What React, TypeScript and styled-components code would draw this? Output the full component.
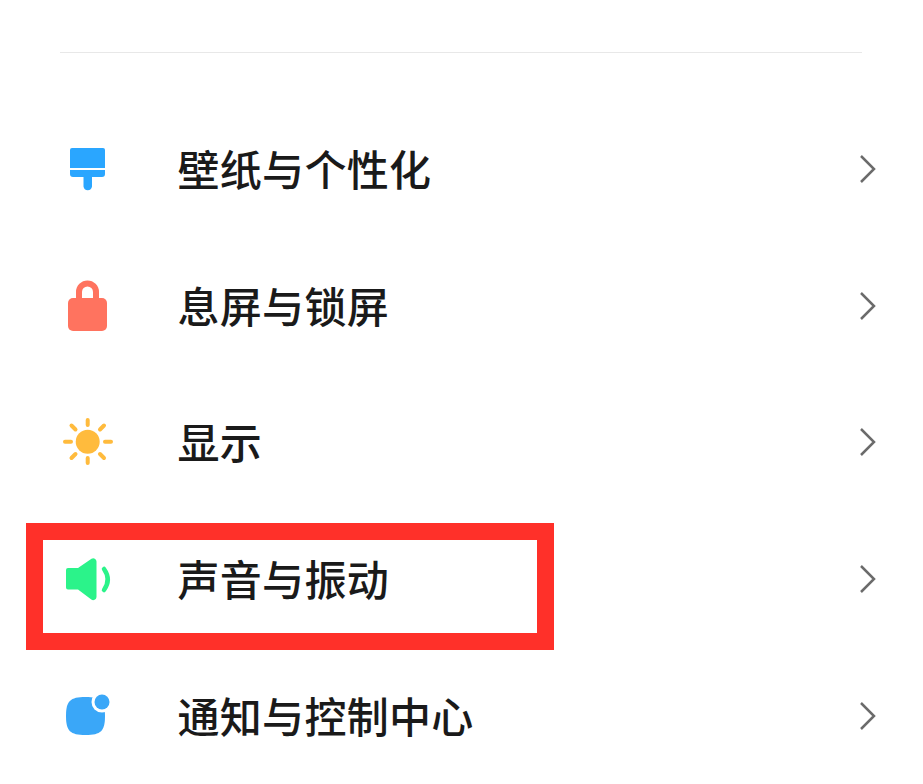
import React from "react";
import styled, { createGlobalStyle } from "styled-components";

const Global = createGlobalStyle`
  html, body { margin: 0; padding: 0; background: #fff; overflow: hidden; }
  #root { width: 923px; height: 784px; overflow: hidden; }
`;

const Page = styled.main`
  width: 923px;
  padding-top: 52px;
  font-family: "Noto Sans CJK SC", "Noto Sans", sans-serif;
`;

const Divider = styled.hr`
  margin: 0 61px 48.6px 60px;
  border: 0;
  height: 1px;
  background: #e8e8e8;
`;

const List = styled.ul`
  margin: 0;
  padding: 0;
  list-style: none;
`;

const Row = styled.li`
  position: relative;
  display: flex;
  align-items: center;
  height: 136.75px;
  padding: 0 46px 0 60px;
`;

const IconSlot = styled.svg`
  flex: none;
  width: 60px;
  height: 60px;
  margin-right: 57.500px;
`;

const Label = styled.span`
  flex: 1;
  margin-bottom: 4px;
  font-size: 42px;
  font-weight: 500;
  line-height: 1;
  letter-spacing: 0.3px;
  color: #1a1a1a;
`;

const Chevron = styled.svg`
  flex: none;
  width: 18px;
  height: 30px;
  margin-top: -2px;
`;

const Highlight = styled.div`
  position: absolute;
  left: 26px;
  top: 11.15px;
  box-sizing: border-box;
  width: 528px;
  height: 127px;
  border: 17px solid #ff3029;
`;

const BrushIcon = () => (
  <IconSlot viewBox="0 0 60 60">
    <path d="M12 8h31a2 2 0 0 1 2 2v18H10V10a2 2 0 0 1 2-2Z" fill="#2aa6ff" />
    <path d="M10 30h35v4a3 3 0 0 1-3 3H32v9.500a4.300 4.300 0 0 1-8.500 0V37H13a3 3 0 0 1-3-3Z" fill="#2aa6ff" />
  </IconSlot>
);

const LockIcon = () => (
  <IconSlot viewBox="0 0 60 60">
    <path d="M19 24v-9a8.500 8.500 0 0 1 17 0v9" fill="none" stroke="#ff735f" strokeWidth="6" />
    <rect x="8" y="21" width="39" height="33" rx="5" fill="#ff735f" />
  </IconSlot>
);

const SunIcon = () => (
  <IconSlot viewBox="0 0 60 60">
    <circle cx="27.700" cy="28.700" r="12" fill="#ffbb3d" />
    <g stroke="#ffbb3d" strokeWidth="4" strokeLinecap="round">
      <path d="M27.700 7v5M27.700 45v5M5 28.700h6M45 28.700h6" />
      <path d="M11.500 12.500l4 4M40 41l4 4M44 12.500l-4 4M15.500 41l-4 4" />
    </g>
  </IconSlot>
);

const SpeakerIcon = () => (
  <IconSlot viewBox="0 0 60 60">
    <path
      d="M8 18h10l13.500-9.200a3.200 3.200 0 0 1 5 2.700V47a3.200 3.200 0 0 1-5.200 2.400L18 39.500H8a2 2 0 0 1-2-2V20a2 2 0 0 1 2-2Z"
      fill="#2bf38a"
    />
    <path d="M44 19c5 7 5 14 0 21" fill="none" stroke="#2bf38a" strokeWidth="4.500" strokeLinecap="round" />
  </IconSlot>
);

const NotifyIcon = () => (
  <IconSlot viewBox="0 0 60 60">
    <path d="M25.500 10C41 10 45 14 45 29C45 44 41 48 25.500 48C10 48 6 44 6 29C6 14 10 10 25.500 10Z" fill="#3aa7f8" />
    <circle cx="42" cy="15" r="10.500" fill="#fff" />
    <circle cx="42" cy="15" r="7.500" fill="#3aa7f8" />
  </IconSlot>
);

const Arrow = () => (
  <Chevron viewBox="0 0 18 30">
    <path d="M2 2l13 13L2 28" fill="none" stroke="#6b6b6b" strokeWidth="2.500" />
  </Chevron>
);

const items = [
  { label: "壁纸与个性化", Icon: BrushIcon },
  { label: "息屏与锁屏", Icon: LockIcon },
  { label: "显示", Icon: SunIcon },
  { label: "声音与振动", Icon: SpeakerIcon, marked: true },
  { label: "通知与控制中心", Icon: NotifyIcon },
];

export default function App() {
  return (
    <Page>
      <Global />
      <Divider />
      <List>
        {items.map(({ label, Icon, marked }) => (
          <Row key={label}>
            <Icon />
            <Label>{label}</Label>
            <Arrow />
            {marked && <Highlight />}
          </Row>
        ))}
      </List>
    </Page>
  );
}
